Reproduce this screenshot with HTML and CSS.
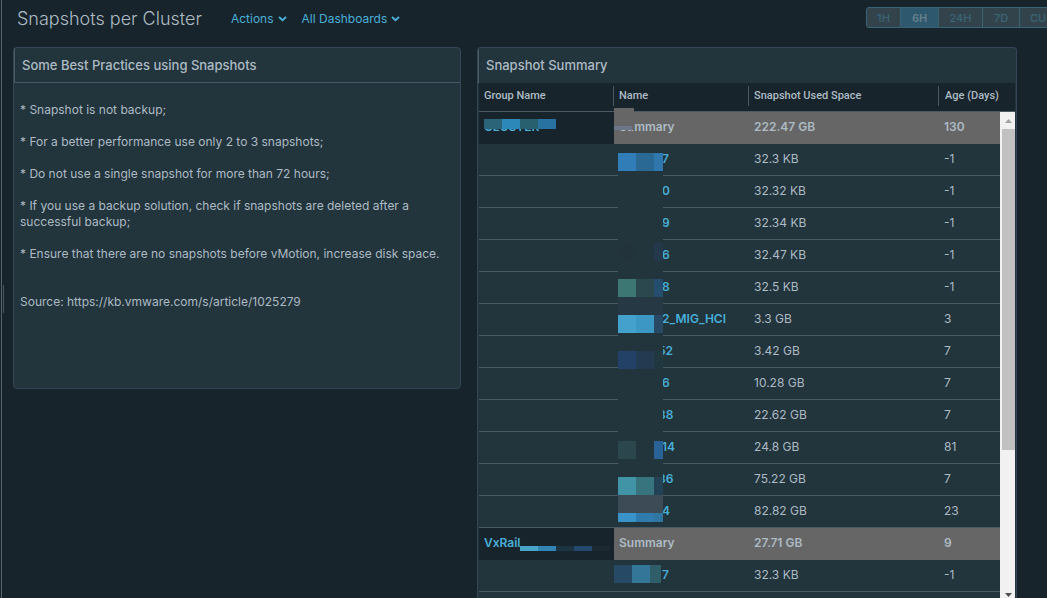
FILE: index.html
```html
<!DOCTYPE html>
<html lang="en">
<head>
<meta charset="utf-8">
<title>Snapshots per Cluster</title>
<link rel="stylesheet" href="styles.css">
</head>
<body>
<div class="app">
  <div class="splitter"><span class="grip"></span></div>
  <main class="main">
    <header class="topbar">
      <h1>Snapshots per Cluster</h1>
      <button class="menu" type="button">Actions
        <svg width="9" height="6" viewBox="0 0 9 6"><path d="M1 1l3.5 3.2L8 1" fill="none" stroke="currentColor" stroke-width="2"/></svg>
      </button>
      <button class="menu" type="button">All Dashboards
        <svg width="9" height="6" viewBox="0 0 9 6"><path d="M1 1l3.5 3.2L8 1" fill="none" stroke="currentColor" stroke-width="2"/></svg>
      </button>
      <div class="ranges">
        <button type="button" class="r1">1H</button><button type="button" class="r2 on">6H</button><button type="button" class="r3">24H</button><button type="button" class="r4">7D</button><button type="button" class="r5">CU</button>
      </div>
    </header>
    <div class="board">
      <section class="panel notes">
        <h2>Some Best Practices using Snapshots</h2>
        <div class="text">
          <p>* Snapshot is not backup;</p>
          <p>* For a better performance use only 2 to 3 snapshots;</p>
          <p>* Do not use a single snapshot for more than 72 hours;</p>
          <p>* If you use a backup solution, check if snapshots are deleted after a<br>successful backup;</p>
          <p>* Ensure that there are no snapshots before vMotion, increase disk space.</p>
          <p class="source">Source: https://kb.vmware.com/s/article/1025279</p>
        </div>
      </section>
      <section class="panel summary">
        <h2>Snapshot Summary</h2>
        <div class="grid">
          <table>
            <colgroup><col class="c1"><col class="c2"><col class="c3"><col class="c4"></colgroup>
            <thead><tr><th><span>Group Name</span></th><th><span>Name</span></th><th><span>Snapshot Used Space</span></th><th><span>Age (Days)</span></th></tr></thead>
            <tbody>
              <tr class="group"><td><a href="#">CLUSTER</a></td><td>Summary</td><td>222.47 GB</td><td>130</td></tr>
              <tr><td></td><td><a class="short" href="#">7</a></td><td>32.3 KB</td><td>-1</td></tr>
              <tr><td></td><td><a class="short" href="#">0</a></td><td>32.32 KB</td><td>-1</td></tr>
              <tr><td></td><td><a class="short" href="#">9</a></td><td>32.34 KB</td><td>-1</td></tr>
              <tr><td></td><td><a class="short" href="#">6</a></td><td>32.47 KB</td><td>-1</td></tr>
              <tr><td></td><td><a class="short" href="#">8</a></td><td>32.5 KB</td><td>-1</td></tr>
              <tr><td></td><td><a class="short" href="#">2_MIG_HCI</a></td><td>3.3 GB</td><td>3</td></tr>
              <tr><td></td><td><a class="long" href="#">52</a></td><td>3.42 GB</td><td>7</td></tr>
              <tr><td></td><td><a class="short" href="#">6</a></td><td>10.28 GB</td><td>7</td></tr>
              <tr><td></td><td><a class="long" href="#">38</a></td><td>22.62 GB</td><td>7</td></tr>
              <tr><td></td><td><a class="short" href="#">14</a></td><td>24.8 GB</td><td>81</td></tr>
              <tr><td></td><td><a class="long" href="#">36</a></td><td>75.22 GB</td><td>7</td></tr>
              <tr><td></td><td><a class="short" href="#">4</a></td><td>82.82 GB</td><td>23</td></tr>
              <tr class="group"><td><a href="#">VxRail</a></td><td>Summary</td><td>27.71 GB</td><td>9</td></tr>
              <tr><td></td><td><a class="short" href="#">7</a></td><td>32.3 KB</td><td>-1</td></tr>
              <tr><td></td><td></td><td></td><td></td></tr>
            </tbody>
          </table>
          <svg class="mosaic" width="185" height="500" viewBox="479 83 185 500" shape-rendering="crispEdges">
            <path fill="#2b6478" d="M484 119h18v10h-18z"/><path fill="#2c88b8" d="M502 119h18v10h-18z"/><path fill="#28606f" d="M520 119h18v10h-18z"/><path fill="#2872a2" d="M538 119h18v10h-18z"/>
            <path fill="#666" d="M614 108h20v18h-20z"/><path fill="#6b7689" d="M614 126h18v4h-18z"/><path fill="#666" d="M632 126h2v4h-2z"/>
            <path fill="#22343c" d="M618 153h45v369h-45z"/>
            <path fill="#307db8" d="M618 153h18v18h-18z"/><path fill="#296993" d="M636 153h18v18h-18z"/><path fill="#2f77ad" d="M654 153h9v18h-9z"/>
            <path fill="#22333b" d="M618 243h18v18h-18z"/><path fill="#23384b" d="M654 243h9v18h-9z"/>
            <path fill="#3c7774" d="M618 279h18v18h-18z"/><path fill="#2b484e" d="M636 279h18v18h-18z"/><path fill="#254d6d" d="M654 279h9v18h-9z"/>
            <path fill="#263843" d="M618 297h45v18h-45z"/>
            <path fill="#43a1cc" d="M618 315h18v18h-18z"/><path fill="#3d97c5" d="M636 315h18v18h-18z"/><path fill="#284964" d="M654 315h9v18h-9z"/>
            <path fill="#234066" d="M618 351h18v18h-18z"/><path fill="#243a50" d="M636 351h18v18h-18z"/><path fill="#223841" d="M654 351h9v18h-9z"/>
            <path fill="#2b464c" d="M618 441h18v18h-18z"/><path fill="#296295" d="M654 441h9v18h-9z"/>
            <path fill="#4094a5" d="M618 477h18v18h-18z"/><path fill="#37747e" d="M636 477h18v18h-18z"/><path fill="#244256" d="M654 477h9v18h-9z"/>
            <path fill="#3d4b56" d="M618 495h45v18h-45z"/>
            <path fill="#3993c9" d="M618 513h18v9h-18z"/><path fill="#2f7bae" d="M636 513h18v9h-18z"/><path fill="#2f76a3" d="M654 513h9v9h-9z"/>
            <path fill="#46a5c9" d="M520 546h18v5h-18z"/><path fill="#3085b5" d="M538 546h18v5h-18z"/><path fill="#1c3341" d="M556 546h18v5h-18z"/><path fill="#24496f" d="M574 546h18v5h-18z"/><path fill="#1c2930" d="M592 546h18v5h-18z"/>
            <path fill="#264a66" d="M614 565h18v18h-18z"/><path fill="#337697" d="M632 565h18v18h-18z"/><path fill="#2f5d68" d="M650 565h11v18h-11z"/>
          </svg>
          <div class="scrollbar">
            <svg width="15" height="17" viewBox="0 0 15 17"><path d="M5 11l3.500-4 3.500 4z" fill="#a3a3a3"/></svg>
            <div class="track"><div class="thumb"></div></div>
            <svg width="15" height="17" viewBox="0 0 15 17"><path d="M5 12h7l-3.500 4z" fill="#505050"/></svg>
          </div>
        </div>
      </section>
    </div>
  </main>
</div>
</body>
</html>
```
FILE: styles.css
```css
* { box-sizing: border-box; }
body {
  margin: 0;
  background: #18242b;
  color: #adbbc4;
  font: 12px/16px Inter, "Liberation Sans", sans-serif;
}
button { font: inherit; cursor: pointer; }
a { color: #49afd9; text-decoration: none; }
.app { display: flex; height: 100vh; overflow: hidden; }
.splitter {
  flex: 0 0 4px;
  display: flex;
  align-items: center;
  justify-content: flex-end;
  background: linear-gradient(#56636c, #56636c) 1px 0 / 1px 100% no-repeat;
}
.grip { width: 1px; height: 28px; background: #48565f; }
.main { flex: 1; min-width: 0; display: flex; flex-direction: column; }
.topbar {
  flex: 0 0 47px;
  display: flex;
  align-items: flex-start;
  padding: 7px 0 0 13px;
  white-space: nowrap;
}
h1 { margin: 0 29px 0 0; font-size: 18px; line-height: 24px; font-weight: 300; }
.menu {
  display: flex;
  align-items: center;
  gap: 4px;
  margin: 0 15px 0 0;
  padding: 0;
  border: 0;
  background: none;
  color: #49afd9;
  line-height: 24px;
}
.ranges {
  flex: none;
  display: flex;
  margin-left: auto;
  margin-right: -36px;
}
.ranges button {
  height: 21px;
  padding: 0;
  border: 1px solid #3a6475;
  border-left-width: 0;
  background: #33434c;
  color: #3a6576;
  font-size: 11px;
  font-weight: 500;
  line-height: 18px;
}
.ranges .r1 { width: 35px; border-left-width: 1px; border-radius: 3px 0 0 3px; }
.ranges .r2 { width: 38px; }
.ranges .r3 { width: 44px; }
.ranges .r4 { width: 37px; }
.ranges .r5 { width: 63px; padding-left: 10px; text-align: left; }
.ranges .on { background: #2d586e; color: #65808b; font-weight: 600; }
.board {
  flex: 1;
  min-height: 0;
  display: grid;
  grid-template-columns: 448fr 540fr;
  gap: 16px;
  padding: 0 30px 0 9px;
}
.panel {
  border: 1px solid #354657;
  border-radius: 4px;
  background: #22343c;
  min-width: 0;
}
.panel h2 {
  margin: 0;
  padding: 0 7px;
  font-size: 13px;
  line-height: 35px;
  font-weight: 500;
}
.panel.notes h2 { line-height: 34px; }
.notes { align-self: start; min-height: 342px; }
.notes h2 { border-bottom: 1px solid #485969; border-left: 1px solid #485969; }
.text { padding: 19px 16px 16px 6px; }
.text p { margin: 0 0 16px; }
.text .source { margin-top: 32px; }
.summary {
  display: flex;
  flex-direction: column;
  border-bottom: 0;
  border-radius: 4px 4px 0 0;
  overflow: hidden;
}
.summary h2 { border-left: 1px solid #485969; }
.grid { position: relative; flex: 1; min-height: 0; overflow: hidden; margin: 0 1px; }
table { width: 100%; table-layout: fixed; border-collapse: separate; border-spacing: 0; }
.c1, .c2 { width: 135px; }
.c3 { width: 190px; }
th {
  height: 29px;
  padding: 3px 0 5px;
  border-bottom: 1px solid #4a5a64;
  background: #18242b;
  font-family: Roboto, "Liberation Sans", sans-serif;
  font-size: 11px;
  font-weight: 500;
  text-align: left;
}
th span { display: block; padding-left: 5px; line-height: 20px; border-right: 1px solid #485760; }
th:last-child span { border-right: 0; padding-left: 6px; }
td {
  height: 32px;
  padding: 0 5px 2px;
  border-bottom: 1px solid #4a5a64;
  font-size: 12px;
  line-height: 28px;
  white-space: nowrap;
}
td a { font-weight: 600; }
.short { padding-left: 43px; }
.long { padding-left: 39px; }
.group td { background: #666; border-bottom-color: #666; font-weight: 600; }
.group td:first-child { background: #18242b; border-bottom-color: #18242b; }
.mosaic { position: absolute; left: 0; top: 0; pointer-events: none; }
.scrollbar {
  position: absolute;
  top: 29px;
  right: 0;
  bottom: 0;
  width: 15px;
  display: flex;
  flex-direction: column;
  background: #f1f1f1;
}
.scrollbar svg { flex: none; display: block; }
.track { flex: 1; }
.thumb { height: 71%; margin-left: 2px; background: #c1c1c1; }
```
